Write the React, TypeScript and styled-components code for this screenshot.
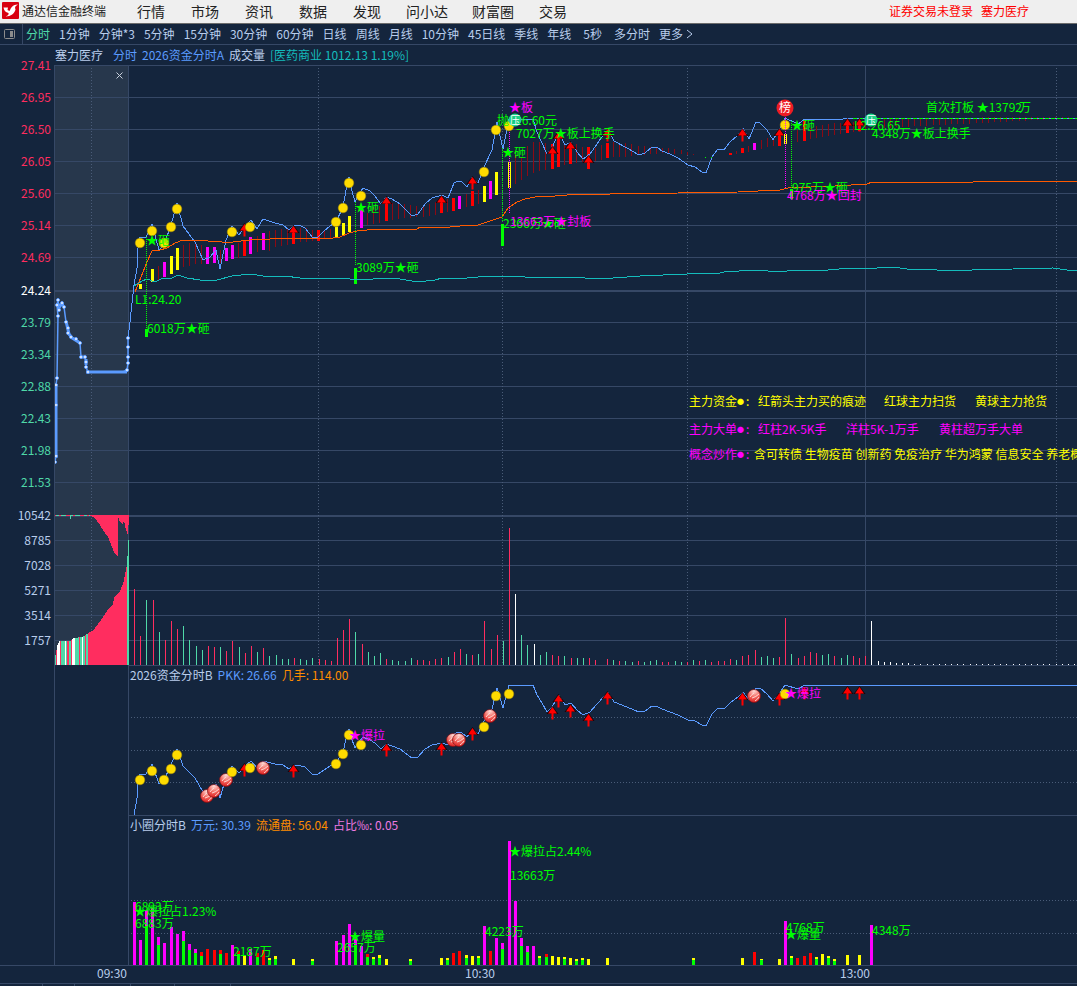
import React from 'react';
import styled, { createGlobalStyle } from 'styled-components';

const C = {
  bg: '#14253d', grid: '#364866', text: '#b9cdec', blue: '#5b9bff', teal: '#14bcbc', red: '#ff2d5f',
  mint: '#4fd8a8', lime: '#00ff00', magenta: '#ff00ff', yellow: '#ffff00', gold: '#ffdc00',
  pure: '#ff0000', dark: '#8c0a14', orange: '#ff5a00',
};

const GlobalStyle = createGlobalStyle`
  * { box-sizing: border-box; }
  body { margin: 0; background: ${C.bg}; font: 12px/16px "Noto Sans CJK SC", sans-serif; color: ${C.text}; }
  button { font: inherit; color: inherit; background: none; border: 0; padding: 0; cursor: pointer; white-space: nowrap; }
`;

const Page = styled.div`display: flex; flex-direction: column; min-height: 100vh; overflow: hidden;`;

const TopBar = styled.header`
  display: flex; align-items: center; height: 24px; padding: 0 48px 2px 2px;
  background: #efefef; border-bottom: 1px solid #6b6b6b; color: #222;
`;
const AppName = styled.span`margin-left: 3px; margin-right: 18px; white-space: nowrap;`;
const Menu = styled.nav`display: flex; flex: 1;`;
const MenuItem = styled.button<{ $long: boolean }>`
  font-size: 14px; line-height: 20px; padding: 0 ${p => (p.$long ? 12 : 13)}px;
`;
const Account = styled.div`display: flex; gap: 8px; color: #ff0000; white-space: nowrap;`;

const PeriodBar = styled.nav`
  display: flex; align-items: center; gap: 9px; height: 21px; padding-left: 3px; border-bottom: 1px solid ${C.grid};
`;
const LayoutButton = styled.button`
  display: flex; align-items: center; height: 20px; width: 20px; border-right: 1px solid ${C.grid}; margin-right: -6px;
`;
const Period = styled.button<{ $active?: boolean; $wide?: boolean }>`
  color: ${p => (p.$active ? C.mint : C.text)};
  padding: 0 ${p => (p.$wide ? 3 : 0)}px;
`;
const More = styled(Period)`display: flex; align-items: center; gap: 3px;`;

const TitleRow = styled.div`display: flex; align-items: center; gap: 5px; height: 20px; padding-left: 55px; white-space: nowrap;`;
const StockName = styled.span`margin-right: 5px;`;
const Tint = styled.span<{ $c: string }>`color: ${p => p.$c};`;

const Body = styled.main`display: grid; grid-template-columns: 54px minmax(0, 1fr);`;
const Axis = styled.div`display: flex; flex-direction: column; padding-right: 3px; text-align: right;`;
const PriceScale = styled.div`margin: -16px 0 4px;`;
const PriceLabel = styled.div<{ $c: string; $base?: boolean }>`
  color: ${p => p.$c}; height: ${p => (p.$base ? 33 : 32)}px; line-height: ${p => (p.$base ? 33 : 32)}px;
`;
const VolumeLabel = styled.div`height: 25px; line-height: 25px;`;
const Plots = styled.div`border-left: 1px solid ${C.grid};`;
const MainPlot = styled.section`position: relative;`;
const Close = styled.button`
  position: absolute; left: 58px; top: 4px; width: 12px; height: 12px; display: flex; align-items: center; justify-content: center;
`;
const Chart = styled.svg`display: block; width: 100%; font: 12px "Noto Sans CJK SC", sans-serif;`;
const TimeChart = styled(Chart)`overflow: visible;`;
const SubPlot = styled.section`margin-left: 73px; border-left: 1px solid ${C.grid}; border-top: 1px solid ${C.grid};`;
const SubTitle = styled.div`display: flex; gap: 5px; height: 18px; line-height: 18px; padding-left: 1px; white-space: nowrap;`;
const TimeAxis = styled.footer`border-top: 1px solid ${C.grid};`;

type P = [number, number];
const pts = (a: P[]) => a.map(p => p.join(',')).join(' ');

const price: P[] = [
  [128, 338], [130, 322], [132, 303], [134, 285], [137, 268], [138, 248], [140, 237], [146, 237], [152, 224], [159, 250], [164, 245],
  [171, 225], [177, 203], [183, 226], [189, 234], [195, 242], [203, 260], [210, 257], [216, 250], [220, 269], [226, 240], [232, 226],
  [239, 235], [245, 226], [251, 220], [257, 229], [263, 219], [275, 223], [283, 225], [289, 230], [295, 225], [301, 226], [305, 228],
  [313, 238], [318, 237], [324, 231], [330, 226], [336, 222], [343, 207], [346, 190], [349, 177], [351, 187], [355, 202], [358, 195],
  [363, 188], [370, 191], [375, 196], [381, 204], [386, 197], [392, 199], [400, 204], [412, 216], [418, 214], [425, 204], [432, 198],
  [442, 195], [448, 198], [454, 183], [458, 181], [462, 182], [467, 187], [472, 177], [478, 183], [484, 167], [492, 150], [497, 122],
  [503, 149], [509, 119], [533, 119], [537, 132], [542, 143], [547, 154], [552, 148], [559, 132], [565, 145], [571, 142], [577, 152],
  [583, 159], [590, 154], [597, 144], [608, 128], [614, 141], [627, 148], [639, 155], [645, 153], [652, 147], [658, 148], [662, 151],
  [670, 154], [678, 158], [688, 165], [695, 167], [702, 172], [706, 173], [712, 157], [718, 149], [724, 150], [730, 142], [738, 135],
  [743, 128], [749, 139], [756, 122], [760, 123], [767, 130], [773, 140], [779, 130], [785, 118], [798, 124], [805, 119], [843, 119],
  [848, 118], [4000, 118],
];
const average: P[] = [
  [135, 292], [147, 262], [152, 251], [160, 250], [167, 248], [175, 243], [183, 240], [197, 240], [208, 241], [222, 242], [233, 242],
  [250, 240], [270, 239], [293, 238], [333, 238], [340, 237], [349, 233], [357, 231], [367, 230], [383, 229], [417, 229], [420, 227],
  [450, 227], [460, 226], [478, 225], [490, 221], [502, 217], [508, 208], [517, 202], [525, 199], [540, 196], [555, 196], [580, 194],
  [610, 194], [678, 193], [738, 192], [758, 191], [780, 190], [788, 188], [835, 186], [867, 184], [872, 182], [973, 182], [974, 181], [4000, 181],
];
const index: P[] = [
  [134, 286], [142, 281], [147, 279], [155, 282], [163, 278], [172, 278], [178, 275], [187, 278], [200, 280], [217, 280], [232, 276],
  [250, 274], [263, 276], [285, 276], [300, 278], [322, 278], [350, 279], [373, 279], [382, 278], [400, 279], [418, 282], [435, 280],
  [442, 278], [467, 278], [490, 276], [510, 276], [540, 278], [570, 277], [600, 279], [640, 276], [687, 274], [720, 273], [728, 271],
  [735, 272], [743, 270], [763, 270], [773, 272], [787, 271], [808, 270], [828, 270], [850, 268], [877, 268], [883, 267], [900, 268],
  [907, 269], [937, 270], [972, 270], [1013, 269], [1053, 268], [1067, 270], [4000, 270],
];
const auction: P[] = [
  [55, 462], [56, 456], [56, 405], [56, 385], [57, 378], [58, 316], [57, 305], [58, 300], [59, 310], [62, 303], [64, 307], [66, 322], [68, 328],
  [68, 333], [71, 337], [76, 339], [80, 343], [81, 357], [85, 357], [86, 362], [86, 367], [88, 372], [123, 372], [127, 370], [128, 363],
  [128, 357], [128, 347], [128, 338],
];

const golds: P[] = [
  [140, 243], [152, 231], [164, 243], [171, 227], [177, 209], [232, 232], [250, 227], [336, 222], [343, 208], [349, 183], [361, 196],
  [484, 172], [496, 130], [509, 126], [785, 125],
];

const bar: Record<string, string> = { y: C.yellow, m: C.magenta, r: C.pure, d: C.dark, g: C.lime, w: '#ffffff' };
type Bar = [number, number, number, string];
const energy: Bar[] = [
  [140, 284, 289, 'y'], [152, 269, 282, 'y'], [158, 266, 280, 'd'], [164, 262, 277, 'm'], [171, 256, 274, 'y'], [177, 248, 270, 'y'],
  [183, 245, 267, 'd'], [189, 243, 266, 'd'], [195, 243, 264, 'd'], [201, 245, 264, 'd'], [207, 247, 264, 'm'], [214, 247, 263, 'm'],
  [220, 250, 263, 'd'], [226, 248, 261, 'm'], [232, 245, 259, 'm'], [238, 243, 258, 'd'], [244, 240, 256, 'r'], [250, 237, 254, 'm'],
  [257, 236, 252, 'd'], [263, 233, 250, 'm'], [269, 231, 251, 'd'], [275, 230, 247, 'd'], [281, 229, 246, 'd'], [287, 228, 245, 'd'],
  [293, 230, 244, 'r'], [300, 228, 242, 'd'], [306, 228, 242, 'd'], [312, 230, 241, 'd'], [318, 230, 241, 'r'], [324, 230, 239, 'd'],
  [330, 229, 239, 'd'], [336, 227, 238, 'y'], [343, 223, 236, 'y'], [349, 216, 232, 'y'], [355, 268, 284, 'g'], [361, 210, 228, 'm'],
  [367, 213, 225, 'd'], [373, 207, 224, 'd'], [379, 206, 223, 'd'], [386, 203, 221, 'r'], [392, 203, 220, 'd'], [398, 203, 219, 'd'],
  [404, 204, 218, 'd'], [410, 205, 218, 'd'], [416, 206, 217, 'd'], [423, 205, 217, 'd'], [429, 204, 216, 'd'], [435, 202, 215, 'd'],
  [441, 200, 213, 'r'], [447, 199, 212, 'd'], [453, 198, 211, 'r'], [459, 196, 209, 'm'], [466, 194, 207, 'd'], [472, 191, 206, 'r'],
  [478, 190, 204, 'd'], [484, 186, 202, 'y'], [490, 181, 199, 'm'], [496, 172, 195, 'y'], [502, 224, 246, 'g'], [515, 155, 184, 'd'],
  [521, 157, 180, 'd'], [527, 146, 176, 'd'], [533, 142, 173, 'd'], [539, 142, 171, 'd'], [545, 143, 170, 'd'], [552, 144, 169, 'r'],
  [558, 137, 167, 'r'], [564, 143, 165, 'd'], [570, 147, 164, 'r'], [576, 144, 163, 'd'], [582, 147, 162, 'd'], [588, 158, 169, 'r'],
  [588, 147, 157, 'r'], [595, 148, 161, 'd'], [601, 145, 160, 'd'], [607, 143, 158, 'r'], [613, 142, 157, 'd'], [619, 143, 157, 'd'], [625, 143, 157, 'd'],
  [631, 144, 156, 'd'], [638, 146, 155, 'd'], [644, 146, 155, 'd'], [650, 147, 154, 'd'], [656, 147, 154, 'd'], [662, 148, 153, 'd'],
  [668, 148, 154, 'd'], [674, 149, 154, 'd'], [681, 150, 154, 'd'], [687, 152, 155, 'd'], [693, 154, 155, 'd'], [730, 153, 155, 'r'],
  [736, 151, 154, 'd'], [742, 148, 153, 'r'], [748, 146, 152, 'd'], [754, 143, 150, 'm'], [761, 140, 149, 'd'], [767, 138, 147, 'd'],
  [773, 138, 146, 'd'], [779, 134, 146, 'r'], [797, 130, 142, 'd'], [804, 121, 141, 'r'], [810, 128, 139, 'd'], [816, 126, 138, 'd'],
  [822, 125, 137, 'd'], [828, 124, 136, 'd'], [834, 123, 135, 'd'], [840, 123, 134, 'd'], [847, 124, 133, 'r'], [853, 122, 132, 'd'],
  [859, 124, 131, 'r'], [865, 121, 130, 'd'], [146, 329, 337, 'g'], [791, 189, 199, 'g'],
  ...Array.from({ length: 31 }, (_, i): Bar => [Math.floor(884 + i * 6.14), i > 15 ? 117 : 118, Math.round(128 - i * 0.32), 'd']),
];

const priceArrows: P[] = [
  [244, 224], [293, 226], [386, 197], [441, 196], [472, 177], [552, 147], [558, 132], [570, 142], [588, 156], [607, 129], [742, 129],
  [779, 129], [847, 119], [859, 119],
];
const subArrows: P[] = [
  [244, 764], [293, 765], [386, 744], [441, 743], [472, 728], [552, 707], [558, 695], [570, 705], [588, 714], [607, 692], [742, 693],
  [779, 693], [804, 687], [847, 687], [859, 687],
];
const subGolds: P[] = [
  [140, 780], [152, 771], [164, 780], [171, 769], [177, 755], [232, 772], [250, 768], [336, 764], [343, 754], [349, 735], [361, 745],
  [484, 727], [496, 696], [509, 694], [785, 694],
];
const balls: P[] = [[207, 796], [214, 791], [226, 780], [263, 768], [453, 740], [459, 740], [490, 716], [754, 696]];

const vol: [number, number, string][] = ([
  [43, 267, 'r'], [61, 408, 'r'], [79, 300, 'g'], [100, 300, 'r'], [118, 396, 'g'], [136, 420, 'r'], [154, 363, 'r'], [172, 387, 'r'],
  [190, 378, 'g'], [208, 420, 'g'], [229, 438, 'g'], [247, 450, 'g'], [265, 438, 'r'], [283, 441, 'r'], [301, 441, 'g'], [319, 453, 'r'],
  [337, 423, 'r'], [358, 441, 'g'], [376, 459, 'r'], [394, 438, 'r'], [412, 456, 'g'], [430, 444, 'r'], [448, 468, 'g'], [469, 465, 'g'],
  [487, 477, 'g'], [505, 477, 'g'], [523, 474, 'r'], [541, 477, 'g'], [559, 480, 'g'], [577, 474, 'g'], [598, 477, 'r'], [616, 480, 'r'],
  [634, 483, 'r'], [652, 414, 'r'], [670, 390, 'r'], [688, 357, 'r'], [706, 396, 'g'], [727, 432, 'r'], [745, 456, 'g'], [763, 468, 'g'],
  [781, 459, 'g'], [799, 477, 'r'], [817, 480, 'g'], [835, 483, 'g'], [856, 483, 'g'], [874, 474, 'g'], [892, 480, 'r'], [910, 480, 'r'],
  [928, 483, 'r'], [946, 477, 'r'], [964, 474, 'r'], [985, 471, 'g'], [1003, 456, 'r'], [1021, 447, 'r'], [1039, 462, 'g'], [1057, 465, 'r'],
  [1075, 462, 'g'], [1093, 363, 'r'], [1114, 447, 'r'], [1132, 405, 'r'], [1150, 423, 'g'], [1168, 84, 'r'], [1186, 282, 'w'],
  [1204, 405, 'g'], [1222, 435, 'g'], [1243, 432, 'w'], [1261, 465, 'g'], [1279, 456, 'g'], [1297, 465, 'r'], [1315, 468, 'r'],
  [1333, 468, 'g'], [1354, 474, 'r'], [1372, 474, 'g'], [1390, 474, 'g'], [1408, 474, 'r'], [1426, 480, 'r'],
] as [number, number, string][]).map(([x, t, c]) => [120 + Math.floor(x / 3), Math.round((495 - t) / 3), c]);
const lateHeights = [6, 5, 4, 4, 3, 4, 3, 4, 5, 3, 3, 4, 3, 3, 5, 4, 5, 3, 4, 4, 6, 5, 9, 10, 15, 8, 9, 7, 8, 47, 11, 7, 9, 13, 12, 10, 11, 9, 7, 10, 9, 7, 9, 44];
const lateColors = 'rgrggrgggrrggrgrgrrrrgrrrgggrrgrrrrggrggrrrw';
lateHeights.forEach((h, i) => vol.push([Math.floor(607.4 + i * 6.15), h, lateColors[i]]));
for (let i = 0; i < 34; i++) vol.push([Math.floor(878 + i * 6.14), [4, 3, 3, 2, 2, 2, 1][Math.min(i, 6)], 'w']);

const auctionVol: P[] = [
  [55, 655], [57, 645], [59, 641], [70, 641], [73, 638], [82, 637], [88, 633], [93, 630], [99, 622], [107, 610], [112, 605], [114, 597],
  [119, 592], [123, 582], [126, 567], [127, 556], [128, 540],
];
const heightAt = (x: number) => {
  const k = Math.max(1, auctionVol.findIndex(p => p[0] >= x));
  const [a, b] = [auctionVol[k - 1], auctionVol[k]];
  return Math.round(a[1] + ((b[1] - a[1]) * (x - a[0])) / (b[0] - a[0]));
};
const auctionTint = 'grwwwrggggwgrrggrwwwggggrggwggrggr';
const tint: Record<string, string> = { g: C.mint, r: C.red, w: '#ffffff' };
const hanging: P[] = [
  [91, 516], [95, 518], [100, 525], [103, 530], [108, 537], [112, 547], [115, 554], [118, 557], [118, 517], [120, 522], [123, 524],
  [124, 521], [126, 530], [128, 535], [129, 516],
];

type Flow = [number, number, string, number?];
const flow: Flow[] = [
  [134, 63, 'm'], [140, 25, 'm'], [146, 55, 'm', 39], [152, 57, 'm'], [158, 28, 'm', 20], [164, 22, 'm'], [171, 38, 'm'], [177, 31, 'm'],
  [183, 34, 'm', 24], [189, 21, 'm', 15], [195, 16, 'm', 12], [201, 13, 'r', 9], [207, 16, 'r'], [214, 15, 'r'], [220, 15, 'r', 11],
  [226, 12, 'r'], [232, 20, 'm'], [238, 14, 'r', 11], [244, 10, 'y'], [250, 16, 'm'], [257, 12, 'r', 8], [263, 15, 'r'], [269, 7, 'y', 5],
  [275, 9, 'y', 6], [293, 6, 'y'], [312, 6, 'y', 4], [336, 24, 'm'], [343, 30, 'm'], [349, 41, 'm'], [355, 29, 'm', 20], [361, 19, 'm'],
  [367, 11, 'r', 8], [373, 8, 'y', 6], [379, 10, 'y', 7], [386, 6, 'y'], [410, 6, 'y', 4], [441, 7, 'y'], [447, 7, 'y', 5], [453, 12, 'r'],
  [459, 14, 'r'], [466, 10, 'y', 7], [472, 9, 'y'], [478, 9, 'y', 7], [484, 39, 'm'], [490, 14, 'r'], [496, 27, 'm'], [502, 22, 'm', 16],
  [509, 124, 'm'], [515, 64, 'm'], [521, 27, 'm', 19], [527, 19, 'm', 13], [533, 19, 'm'], [539, 9, 'y', 7], [546, 11, 'r', 8],
  [552, 9, 'y'], [558, 8, 'y'], [564, 8, 'y', 6], [570, 7, 'y'], [576, 6, 'y', 4], [582, 7, 'y', 5], [588, 6, 'y'], [607, 7, 'y'],
  [693, 7, 'y', 5], [742, 7, 'y'], [754, 13, 'r'], [761, 6, 'y', 5], [779, 6, 'y'], [785, 44, 'm'], [791, 9, 'y', 7], [797, 7, 'r'],
  [804, 9, 'r'], [810, 12, 'r'], [816, 8, 'y', 6], [822, 11, 'y'], [828, 9, 'y', 7], [834, 6, 'y', 4], [847, 10, 'y'], [859, 10, 'y'],
  [871, 40, 'm'],
];

type Note = [number, number, string, string];
const notes: Note[] = [
  [146, 240, '★砸', C.lime], [135, 299, 'L1:24.20', C.lime], [147, 328, '6018万★砸', C.lime], [355, 207, '★砸', C.lime],
  [356, 267, '3089万★砸', C.lime], [509, 107, '★板', C.magenta], [497, 120, '抛: 26.60元', C.lime], [516, 133, '7027万★板上换手', C.lime],
  [502, 152, '★砸', C.lime], [503, 223, '2366万★砸', C.lime], [510, 221, '13663万★封板', C.magenta], [791, 125, '★砸', C.lime],
  [926, 107, '首次打板 ★13792', C.lime], [1019, 107, '万', C.lime], [854, 125, 'L2:26.65', C.lime], [872, 133, '4348万★板上换手', C.lime],
  [792, 187, '975万★砸', C.lime], [787, 195, '4768万★回封', C.magenta],
  [689, 401, '主力资金', C.yellow], [746, 401, ':', C.yellow], [758, 401, '红箭头主力买的痕迹', C.yellow], [884, 401, '红球主力扫货', C.yellow], [975, 401, '黄球主力抢货', C.yellow],
  [689, 429, '主力大单', C.magenta], [746, 429, ':', C.magenta], [758, 429, '红柱2K-5K手', C.magenta], [846, 429, '洋柱5K-1万手', C.magenta], [939, 429, '黄柱超万手大单', C.magenta],
  [689, 454, '概念炒作', C.magenta], [746, 454, ':', C.magenta],
  [754, 454, '含可转债 生物疫苗 创新药 免疫治疗 华为鸿蒙 信息安全 养老概念', C.yellow],
];
const flowNotes: Note[] = [
  [135, 906, '6893万', C.lime], [134, 911, '★爆拉占1.23%', C.lime], [135, 923, '6883万', C.lime], [233, 951, '2187万', C.lime],
  [349, 936, '★爆量', C.lime], [337, 947, '2657万', C.lime], [485, 931, '4223万', C.lime], [509, 851, '★爆拉占2.44%', C.lime],
  [510, 875, '13663万', C.lime], [786, 927, '4768万', C.lime], [785, 934, '★爆量', C.lime], [872, 930, '4348万', C.lime],
];

const Notes = ({ items }: { items: Note[] }) => (
  <>{items.map(([x, y, s, c], i) => <text key={i} x={x} y={y + 5} fill={c}>{s}</text>)}</>
);
const HLine = ({ y, thick }: { y: number; thick?: boolean }) => <rect x="0" y={y} width="200%" height={thick ? 2 : 1} fill={C.grid} />;
const Dotted = ({ x, from, to, color }: { x: number; from: number; to: number; color: string }) => (
  <line x1={x + 0.5} x2={x + 0.5} y1={from} y2={to} stroke={color} strokeDasharray="1 2" />
);
const Bead = ({ x, from, to, color }: { x: number; from: number; to: number; color: string }) => (
  <line x1={x + 0.5} x2={x + 0.5} y1={from} y2={to} stroke={color} strokeDasharray="1 1" />
);
const Arrow = ({ at: [x, y] }: { at: P }) => (
  <g>
    <path d={`M${x + 0.5} ${y - 1}l-6 8h12z`} fill="#1a0508" />
    <path d={`M${x + 0.5} ${y}l-4.500 6.500h3.500v6h2v-6h3.500z`} fill={C.pure} />
  </g>
);
const Gold = ({ at: [x, y] }: { at: P }) => <circle cx={x} cy={y} r="4.800" fill={C.gold} stroke="#a88a00" strokeWidth="0.5" />;
const Ball = ({ at: [x, y] }: { at: P }) => (
  <g transform={`translate(${x} ${y})`}>
    <circle r="6.500" fill="url(#ball)" stroke="#7a0c10" strokeWidth="0.7" />
    <path d="M-2 2Q2 1 5-2M-4 1Q-2-2 0-3M1 5Q4 3 5 1" stroke="#ffe4e0" strokeWidth="0.9" fill="none" />
  </g>
);

const labels: [string, string][] = [
  ['27.41', C.red], ['26.95', C.red], ['26.50', C.red], ['26.05', C.red], ['25.60', C.red], ['25.14', C.red], ['24.69', C.red], ['24.24', '#ffffff'],
  ['23.79', C.mint], ['23.34', C.mint], ['22.88', C.mint], ['22.43', C.mint], ['21.98', C.mint], ['21.53', C.mint],
];
const periods = ['分时', '1分钟', '分钟*3', '5分钟', '15分钟', '30分钟', '60分钟', '日线', '周线', '月线', '10分钟', '45日线', '季线', '年线', '5秒', '多分时'];
const gridRows = [65, 97, 129, 161, 193, 225, 257, 322, 354, 386, 418, 450, 482, 540, 565, 590, 615, 640];

function PriceChart() {
  return (
    <Chart height="600" role="img" aria-label="分时走势">
      <g transform="translate(-55 -65)">
        <rect x="55" y="66" width="73" height="599" fill="#27374c" />
        <g shapeRendering="crispEdges">
          {gridRows.map(y => <HLine key={y} y={y} />)}
          <HLine y={290} thick />
          <HLine y={515} thick />
          {[91, 318, 502, 687, 1056].map(x => <Dotted key={x} x={x} from={68} to={665} color="#4a5c78" />)}
          {[128, 865].map(x => <rect key={x} x={x} y="65" width="1" height="600" fill={C.grid} />)}
          {energy.map(([x, a, b, c], i) => (
            <rect key={i} x={c === 'd' ? x : x - 1} y={a} width={c === 'd' ? 1 : 3} height={b - a} fill={bar[c]} />
          ))}
          {[[508, 162, 26], [510, 162, 26]].map(([x, y, h]) => (
            <rect key={x} x={x} y={y} width="1" height={h} fill={C.yellow} />
          ))}
          <polyline points={pts(price)} fill="none" stroke={C.blue} />
          <polyline points={pts(average)} fill="none" stroke={C.orange} />
          <polyline points={pts(index)} fill="none" stroke={C.teal} />
          <line x1="853" x2="4000" y1="118.500" y2="118.500" stroke={C.lime} strokeDasharray="4 2" />
          <rect x="54" y="290" width="1" height="170" fill={C.blue} />
          <rect x="705" y="157" width="1" height="1" fill={C.lime} />
          <rect x="711" y="157" width="1" height="1" fill={C.lime} />
        </g>
        {priceArrows.map((p, i) => <Arrow key={i} at={p} />)}
        {golds.map((p, i) => <Gold key={i} at={p} />)}
        <g shapeRendering="crispEdges">
          {[784, 786].map(x => <rect key={x} x={x} y="134" width="1" height="10" fill={C.yellow} />)}
          <Bead x={146} from={237} to={328} color={C.lime} />
          <Bead x={355} from={202} to={266} color={C.lime} />
          <Bead x={502} from={148} to={222} color={C.lime} />
          <Bead x={509} from={132} to={214} color={C.magenta} />
          <Bead x={785} from={117} to={188} color={C.magenta} />
          <Bead x={791} from={121} to={188} color={C.lime} />
        </g>
        <polyline points={pts(auction)} fill="none" stroke={C.blue} strokeWidth="1.500" />
        <path d="M57 305h7M66 321L69 334L72 338L80 343M81 357h4M86 359v6M86 372h41M56 458V386" fill="none" stroke={C.blue} strokeWidth="3" />
        {auction.filter((_, i) => i !== 22).map(([x, y], i) => (
          <circle key={i} cx={x} cy={y} r="1.500" fill="#ffffff" stroke={C.blue} />
        ))}
        <g shapeRendering="crispEdges">
          {Array.from({ length: 74 }, (_, i) => {
            const x = 55 + i;
            const color = x > 126 ? C.mint : tint[auctionTint[i]] || C.red;
            return <rect key={x} x={x} y={heightAt(x)} width="1" height={665 - heightAt(x)} fill={color} />;
          })}
          <rect x="55" y="515" width="74" height="1" fill={C.red} />
          <path d="M56 515.500H90" stroke={C.mint} strokeDasharray="3 2 5 4" />
          <rect x="70" y="516" width="1" height="3" fill={C.mint} />
          <polygon points={pts(hanging)} fill={C.red} />
          {vol.map(([x, h, c], i) => <rect key={i} x={x} y={665 - h} width="1" height={h} fill={tint[c]} />)}
        </g>
        <Notes items={notes} />
        {[[401, C.yellow], [429, C.magenta], [454, C.magenta]].map(([y, c]) => (
          <text key={y} x="737" y={Number(y) + 3} fontSize="7" fill={String(c)}>●</text>
        ))}
        <circle cx="785" cy="108" r="8.500" fill="#ee1c24" />
        <text x="779" y="112" fill="#ffffff">榜</text>
        {[[515, 120], [871, 120]].map(([x, y]) => (
          <g key={x}>
            <circle cx={x} cy={y} r="6.500" fill="url(#jade)" />
            <text x={x - 5} y={y + 4} fontSize="10" fill="#ffffff">压</text>
          </g>
        ))}
      </g>
      <defs>
        <radialGradient id="jade">
          <stop offset="0" stopColor="#10c080" />
          <stop offset="1" stopColor="#1fdc8c" />
        </radialGradient>
      </defs>
    </Chart>
  );
}

export default function App() {
  return (
    <Page>
      <GlobalStyle />
      <TopBar>
        <svg width="17" height="17" viewBox="0 0 17 17" aria-hidden="true">
          <rect width="17" height="17" rx="1" fill="#d8000f" />
          <path d="M1.500 5.500L6 5.500L5.500 8L7.500 9L9 6C10.500 3.500 13 2.500 16 2.500C13 4 12.500 5.500 13.500 7.500C12.500 11.500 9 14.500 3.500 14.500C6 13.500 7 12.500 6.500 11C3.500 10.500 2 8.500 1.500 5.500z" fill="#fff" />
        </svg>
        <AppName>通达信金融终端</AppName>
        <Menu>
          {['行情', '市场', '资讯', '数据', '发现', '问小达', '财富圈', '交易'].map(m => (
            <MenuItem key={m} $long={m.length > 2}>{m}</MenuItem>
          ))}
        </Menu>
        <Account><span>证券交易未登录</span><span>塞力医疗</span></Account>
      </TopBar>
      <PeriodBar>
        <LayoutButton aria-label="布局">
          <svg width="13" height="12" viewBox="0 0 13 12">
            <rect x="1.500" y="1.500" width="10" height="9" rx="1" fill="none" stroke="#8c8c8c" />
            <rect x="7" y="3" width="3" height="6" fill="#8c8c8c" />
          </svg>
        </LayoutButton>
        {periods.map((p, i) => <Period key={p} $active={i === 0} $wide={p === '5秒'}>{p}</Period>)}
        <More>
          更多
          <svg width="7" height="10" viewBox="0 0 7 10"><path d="M1 1l5 4-5 4" fill="none" stroke={C.text} /></svg>
        </More>
      </PeriodBar>
      <TitleRow>
        <StockName>塞力医疗</StockName>
        <Tint $c={C.blue}>分时</Tint>
        <Tint $c={C.blue}>2026资金分时A</Tint>
        <span>成交量</span>
        <Tint $c={C.teal}>[医药商业 1012.13 1.19%]</Tint>
      </TitleRow>
      <Body>
        <Axis>
          <PriceScale>
            {labels.map(([s, c]) => <PriceLabel key={s} $c={c} $base={s === '24.24'}>{s}</PriceLabel>)}
          </PriceScale>
          {['10542', '8785', '7028', '5271', '3514', '1757'].map(s => <VolumeLabel key={s}>{s}</VolumeLabel>)}
        </Axis>
        <Plots>
          <MainPlot>
            <PriceChart />
            <Close aria-label="关闭">
              <svg width="7" height="7" viewBox="0 0 7 7"><path d="M.5.5l6 6M6.500.5l-6 6" stroke="#c8d0dc" /></svg>
            </Close>
          </MainPlot>
          <SubPlot>
            <SubTitle>
              <span>2026资金分时B</span><Tint $c={C.blue}>PKK: 26.66</Tint><Tint $c="#ff8c00">几手: 114.00</Tint>
            </SubTitle>
            <Chart height="131" role="img" aria-label="资金分时">
              <defs>
                <radialGradient id="ball" cx="0.5" cy="0.1" r="0.9">
                  <stop offset="0" stopColor="#ffe0dc" />
                  <stop offset="0.5" stopColor="#f47068" />
                  <stop offset="1" stopColor="#e02020" />
                </radialGradient>
              </defs>
              <g transform="translate(-129 -684)">
                {[717, 750, 782].map(y => <line key={y} x1="131" x2="4000" y1={y + 0.5} y2={y + 0.5} stroke="#4a5c78" strokeDasharray="1 2" />)}
                <polyline
                  shapeRendering="crispEdges"
                  points={`134,815 ${pts(price.filter(p => p[0] > 136).map(([x, y]): P => [x, Math.round(685.3 + (y - 119) * 0.754)]))}`}
                  fill="none"
                  stroke={C.blue}
                />
                {subArrows.map((p, i) => <Arrow key={i} at={p} />)}
                {balls.map((p, i) => <Ball key={i} at={p} />)}
                {subGolds.map((p, i) => <Gold key={i} at={p} />)}
                <Notes items={[[349, 735, '★爆拉', C.magenta], [785, 693, '★爆拉', C.magenta]]} />
              </g>
            </Chart>
          </SubPlot>
          <SubPlot>
            <SubTitle>
              <span>小圈分时B</span><Tint $c={C.blue}>万元: 30.39</Tint><Tint $c="#ff8c00">流通盘: 56.04</Tint><Tint $c="#ee7ae0">占比‰: 0.05</Tint>
            </SubTitle>
            <Chart height="131" role="img" aria-label="小圈分时">
              <g transform="translate(-129 -834)">
                {[900, 933].map(y => <line key={y} x1="131" x2="4000" y1={y + 0.5} y2={y + 0.5} stroke="#4a5c78" strokeDasharray="1 2" />)}
                <g shapeRendering="crispEdges">
                  {flow.map(([x, h, c, g], i) => (
                    <g key={i}>
                      <rect x={x - 1} y={965 - h} width="3" height={h} fill={bar[c]} />
                      {g && <rect x={x - 1} y={965 - g} width="3" height={g} fill={C.lime} />}
                    </g>
                  ))}
                </g>
                <Notes items={flowNotes} />
              </g>
            </Chart>
          </SubPlot>
        </Plots>
      </Body>
      <TimeAxis>
        <TimeChart height="20">
          <Notes items={[[97, 7, '09:30', C.text], [465, 7, '10:30', C.text], [840, 7, '13:00', C.text]]} />
          <rect y="17" width="100%" height="1" fill={C.grid} />
          {[42, 74, 130, 174, 230].map(x => <rect key={x} x={x} y="17" width="1" height="3" fill={C.grid} />)}
        </TimeChart>
      </TimeAxis>
    </Page>
  );
}
